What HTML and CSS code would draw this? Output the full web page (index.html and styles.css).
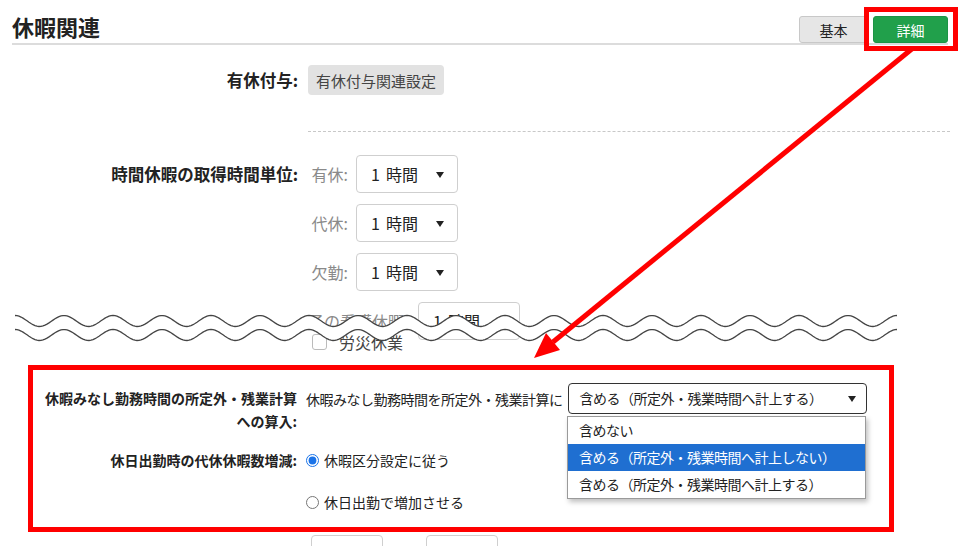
FILE: index.html
```html
<!DOCTYPE html>
<html lang="ja">

<head>
    <meta charset="UTF-8">
    <title>休暇関連</title>
    <link rel="stylesheet" href="styles.css">
</head>

<body>

    <header class="page-head">
        <h1>休暇関連</h1>
        <div class="mode-switch">
            <button class="mode-btn">基本</button>
            <button class="mode-btn active">詳細<span class="mark-box"></span></button>
        </div>
    </header>

    <main class="settings">
        <div class="row row-center">
            <div class="row-label">有休付与:</div>
            <div class="row-body">
                <button class="sub-btn">有休付与関連設定</button>
            </div>
        </div>

        <hr class="dash">

        <div class="row units-row">
            <div class="row-label tall">時間休暇の取得時間単位:</div>
            <div class="row-body units">
                <div class="unit">
                    <span class="unit-label">有休:</span>
                    <div class="select"><span class="num">1</span>時間</div>
                </div>
                <div class="unit">
                    <span class="unit-label">代休:</span>
                    <div class="select"><span class="num">1</span>時間</div>
                </div>
                <div class="unit">
                    <span class="unit-label">欠勤:</span>
                    <div class="select"><span class="num">1</span>時間</div>
                </div>
                <div class="unit">
                    <span class="unit-label wide">子の看護休暇:</span>
                    <div class="select"><span class="num">1</span>時間</div>
                </div>
                <div class="unit check-row">
                    <span class="check"></span>
                    <span class="check-text">労災休業</span>
                </div>
            </div>
        </div>

        <section class="focus-box">
            <div class="row">
                <div class="row-label two-line">休暇みなし勤務時間の所定外・残業計算<br>への算入:</div>
                <div class="row-body inline">
                    <span class="plain">休暇みなし勤務時間を所定外・残業計算に</span>
                    <div class="select big open">
                        含める（所定外・残業時間へ計上する）
                        <ul class="options">
                            <li>含めない</li>
                            <li class="hover">含める（所定外・残業時間へ計上しない）</li>
                            <li>含める（所定外・残業時間へ計上する）</li>
                        </ul>
                    </div>
                </div>
            </div>
            <div class="row second">
                <div class="row-label radio-label">休日出勤時の代休休暇数増減:</div>
                <div class="row-body radios">
                    <label class="radio"><input type="radio" name="daikyu" checked> 休暇区分設定に従う</label>
                    <label class="radio"><input type="radio" name="daikyu"> 休日出勤で増加させる</label>
                </div>
            </div>
        </section>

        <div class="cut-row">
            <span class="small-input"></span>
            <span class="gap"></span>
            <span class="small-input"></span>
        </div>
    </main>

    <svg class="tear" width="977" height="50" viewBox="0 0 977 50">
        <path class="tear-fill" d=""></path>
        <path class="tear-line top" d=""></path>
        <path class="tear-line bottom" d=""></path>
    </svg>

    <svg class="arrow" width="977" height="546" viewBox="0 0 977 546">
        <line x1="913" y1="48" x2="553" y2="342" stroke="#ff0000" stroke-width="5"></line>
        <polygon points="534,358 560,350 546,333" fill="#ff0000"></polygon>
    </svg>

    <script>
        // wavy "cut" lines across the page
        let tear = document.querySelector(".tear");
        let start = 15, end = 898, period = 49, amp = 5.5;
        let topY = 21, gap = 14;

        function wave(y, reverse) {
            let pts = [];
            for (let x = start; x <= end; x += 2) {
                pts.push([x, y - amp * Math.cos((x - start) / period * Math.PI * 2)]);
            }
            if (reverse) pts.reverse();
            return pts.map(p => p[0] + "," + p[1].toFixed(2));
        }

        let a = wave(topY), b = wave(topY + gap);
        tear.querySelector(".top").setAttribute("d", "M" + a.join(" L"));
        tear.querySelector(".bottom").setAttribute("d", "M" + b.join(" L"));
        tear.querySelector(".tear-fill").setAttribute("d", "M" + a.join(" L") + " L" + wave(topY + gap, true).join(" L") + " Z");
    </script>
</body>

</html>
```

FILE: styles.css
```css
* {
    box-sizing: border-box;
}

body {
    margin: 0;
    width: 977px;
    height: 546px;
    overflow: hidden;
    position: relative;
    background-color: #fff;
    color: #222;
    font-family: "Noto Sans CJK JP", "Liberation Sans", sans-serif;
}

.page-head {
    display: flex;
    justify-content: space-between;
    align-items: flex-end;
    margin: 0 29px 0 12px;
    padding-top: 12px;
    border-bottom: 2px solid #dcdcdc;
}

.page-head h1 {
    margin: 0 0 3px;
    font-size: 22px;
    line-height: 28px;
    font-weight: bold;
}

.mode-switch {
    display: flex;
    gap: 5px;
}

.mode-btn {
    position: relative;
    height: 27px;
    width: 69px;
    padding: 0;
    border: 1px solid #c8c8c8;
    border-radius: 3px;
    background-color: #e6e6e6;
    color: #222;
    font-family: inherit;
    font-size: 14px;
}

.mode-btn.active {
    width: 75px;
    border-color: #1c9446;
    background-color: #21a04b;
    color: #fff;
}

.mark-box {
    position: absolute;
    top: -10px;
    left: -10px;
    right: -11px;
    bottom: -9px;
    border: 5px solid #ff0000;
}

.row {
    display: flex;
    align-items: flex-start;
}

.row-center {
    align-items: center;
    margin-top: 20px;
}

.row-label {
    width: 298px;
    flex-shrink: 0;
    text-align: right;
    font-size: 16.5px;
    font-weight: bold;
    white-space: nowrap;
}

.row-label.tall {
    line-height: 38px;
}

.row-body {
    margin-left: 10px;
}

.sub-btn {
    height: 30px;
    padding: 0 8px;
    border: none;
    border-radius: 4px;
    background-color: #e2e2e2;
    color: #444;
    font-family: inherit;
    font-size: 15px;
}

.dash {
    margin: 36px 27px 0 308px;
    border: none;
    border-top: 1px dashed #c8c8c8;
    height: 0;
}

.units-row {
    margin-top: 23px;
}

.unit {
    display: flex;
    align-items: center;
    margin-bottom: 11px;
}

.unit-label {
    width: 40px;
    text-align: right;
    color: #8a8a8a;
    font-size: 16px;
    margin-right: 8px;
}

.unit-label.wide {
    width: 102px;
    text-align: left;
}

.select {
    position: relative;
    width: 102px;
    height: 38px;
    padding-left: 14px;
    border: 1px solid #cfcfcf;
    border-radius: 4px;
    background-color: #fff;
    font-size: 16px;
    line-height: 36px;
}

.select .num {
    margin-right: 6px;
}

.select::after {
    content: "";
    position: absolute;
    right: 13px;
    top: 16px;
    border-left: 4.5px solid transparent;
    border-right: 4.5px solid transparent;
    border-top: 6px solid #222;
}

.check-row {
    margin-top: -21px;
}

.check {
    width: 15px;
    height: 16px;
    margin-left: 4px;
    border: 1px solid #bbb;
    border-radius: 3px;
}

.check-text {
    margin-left: 12px;
    font-size: 16px;
    color: #444;
}

.tear {
    position: absolute;
    left: 0;
    top: 300px;
}

.tear-fill {
    fill: #fff;
}

.tear-line {
    fill: none;
    stroke: #444;
    stroke-width: 1.3;
}

.focus-box {
    position: relative;
    width: 866px;
    height: 167px;
    margin: 0 0 0 28px;
    padding-top: 13px;
    border: 5px solid #ff0000;
}

.focus-box .row-label {
    width: 264px;
    font-size: 14px;
}

.focus-box .row-body {
    margin-left: 9px;
}

.row-label.two-line {
    padding-top: 4px;
    line-height: 23px;
}

.inline {
    display: flex;
    align-items: center;
    font-size: 14px;
}

.plain {
    margin-right: 5px;
    letter-spacing: -0.5px;
}

.select.big {
    width: 299px;
    height: 31px;
    padding-left: 11px;
    border: 1.5px solid #333;
    font-size: 14px;
    line-height: 28px;
    letter-spacing: -0.5px;
}

.select.big::after {
    top: 12px;
    right: 10px;
}

.options {
    position: absolute;
    left: -1.5px;
    top: 32px;
    width: 299px;
    margin: 0;
    padding: 0;
    list-style: none;
    border: 1px solid #9a9a9a;
    background-color: #fff;
    box-shadow: 2px 3px 5px rgba(0, 0, 0, 0.25);
    z-index: 2;
}

.options li {
    height: 27px;
    padding-left: 11px;
    line-height: 27px;
    font-size: 14px;
}

.options li.hover {
    background-color: #1f6fd1;
    color: #fff;
}

.row.second {
    margin-top: 13px;
}

.radio-label {
    line-height: 28px;
}

.radios {
    display: flex;
    flex-direction: column;
    gap: 14px;
}

.radio {
    display: flex;
    align-items: center;
    height: 28px;
    font-size: 14px;
}

.radio input {
    width: 13px;
    height: 13px;
    margin: 0 5px 0 0;
    accent-color: #1a73e8;
}

.cut-row {
    display: flex;
    align-items: flex-start;
    margin: 3px 0 0 311px;
}

.small-input {
    width: 72px;
    height: 30px;
    border: 1px solid #cfcfcf;
    border-radius: 4px;
}

.gap {
    width: 43px;
}

.arrow {
    position: absolute;
    left: 0;
    top: 0;
    pointer-events: none;
}
```
